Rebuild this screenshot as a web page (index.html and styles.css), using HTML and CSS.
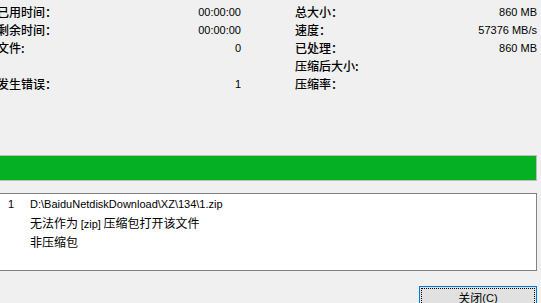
FILE: index.html
```html
<!DOCTYPE html>
<html lang="zh-CN">
<head>
  <meta charset="UTF-8" />
  <meta name="viewport" content="width=device-width, initial-scale=1" />
  <title>压缩包测试</title>
  <link rel="stylesheet" href="styles.css">
</head>
<body>
  <div class="dialog">
    <section class="stats">
      <div class="col col-left">
        <div class="row"><span class="label">已用时间：</span><span class="value">00:00:00</span></div>
        <div class="row"><span class="label">剩余时间：</span><span class="value">00:00:00</span></div>
        <div class="row"><span class="label">文件:</span><span class="value">0</span></div>
        <div class="row"></div>
        <div class="row"><span class="label">发生错误：</span><span class="value">1</span></div>
      </div>
      <div class="col">
        <div class="row"><span class="label">总大小：</span><span class="value">860 MB</span></div>
        <div class="row"><span class="label">速度：</span><span class="value">57376 MB/s</span></div>
        <div class="row"><span class="label">已处理：</span><span class="value">860 MB</span></div>
        <div class="row"><span class="label">压缩后大小:</span><span class="value"></span></div>
        <div class="row"><span class="label">压缩率：</span><span class="value"></span></div>
      </div>
    </section>

    <div class="progress"><div class="progress-fill" style="width: 100%"></div></div>

    <div class="log">
      <div class="log-item">
        <span class="log-num latin">1</span>
        <div class="log-msg">
          <div class="latin">D:\BaiduNetdiskDownload\XZ\134\1.zip</div>
          <div>无法作为 <span class="latin">[zip]</span> 压缩包打开该文件</div>
          <div>非压缩包</div>
        </div>
      </div>
    </div>

    <div class="actions">
      <button class="btn"><span class="btn-focus">关闭<span class="latin">(C)</span></span></button>
    </div>
  </div>
</body>
</html>
```

FILE: styles.css
```css
body {
  margin: 0;
  width: 541px;
  height: 303px;
  overflow: hidden;
  background: #f0f0f0;
  color: #000;
  font-family: "Noto Sans CJK SC", "Liberation Sans", sans-serif;
  font-size: 12px;
}

.dialog {
  margin-left: -4px;
  width: 541px;
}

.latin {
  font-family: "Liberation Sans", "Noto Sans CJK SC", sans-serif;
  font-size: 11px;
}

/* Statistik */
.stats {
  display: grid;
  grid-template-columns: 245px 1fr;
  column-gap: 54px;
  padding-top: 3px;
}

.col-left {
  padding-left: 1px;
}

.row {
  display: flex;
  justify-content: space-between;
  height: 18px;
  line-height: 18px;
}

.label {
  font-weight: 500;
}

.value {
  font-family: "Liberation Sans", sans-serif;
  font-size: 11px;
}

/* Fortschritt */
.progress {
  margin-top: 62px;
  height: 24px;
  border: 1px solid #bcbcbc;
  background: #e6e6e6;
}

.progress-fill {
  height: 100%;
  background: #06b025;
}

/* Liste */
.log {
  margin-top: 12px;
  height: 78px;
  box-sizing: border-box;
  border: 1px solid #828282;
  background: #fff;
  padding-top: 2px;
}

.log-item {
  display: flex;
  line-height: 17.5px;
}

.log-num {
  width: 22px;
  padding-left: 11px;
}

/* Buttons */
.actions {
  display: flex;
  justify-content: flex-end;
  margin-top: 15px;
}

.btn {
  width: 118px;
  height: 23px;
  padding: 1px;
  border: 1px solid #0078d7;
  background: #e1e1e1;
  font-family: inherit;
  font-size: 12px;
  color: #000;
}

.btn-focus {
  display: flex;
  align-items: center;
  justify-content: center;
  height: 100%;
  border: 1px dotted #000;
  box-sizing: border-box;
}
```
